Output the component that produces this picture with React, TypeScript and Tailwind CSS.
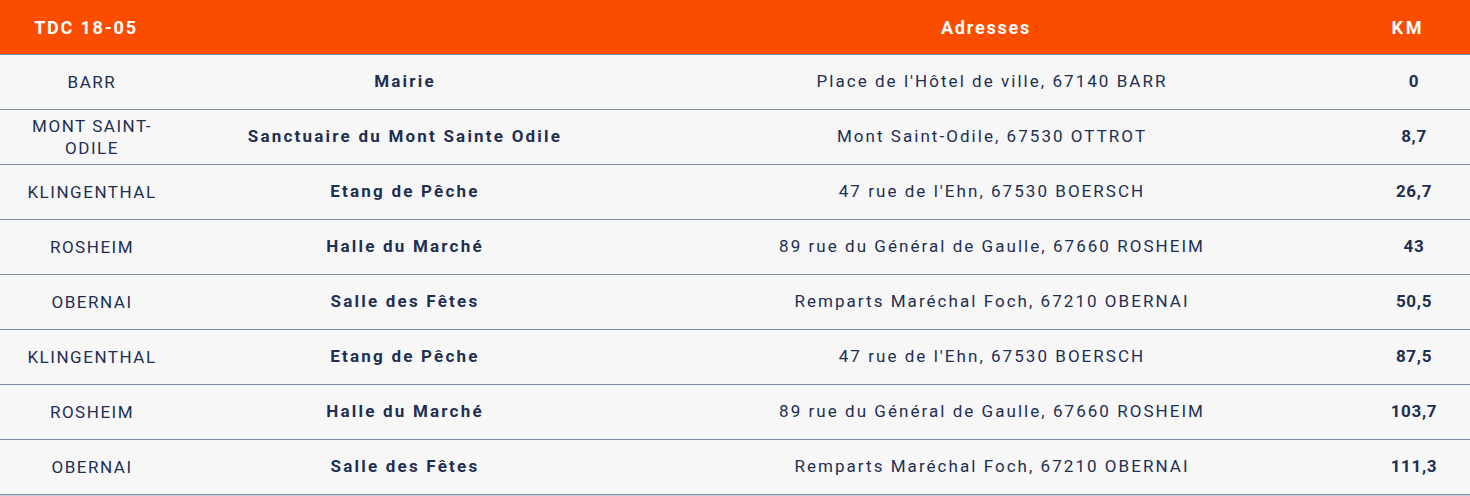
import React from 'react'

type Stop = {
  town: string
  place: string
  address: string
  km: string
}

const stops: Stop[] = [
  { town: 'BARR', place: 'Mairie', address: "Place de l'Hôtel de ville, 67140 BARR", km: '0' },
  { town: 'MONT SAINT-ODILE', place: 'Sanctuaire du Mont Sainte Odile', address: 'Mont Saint-Odile, 67530 OTTROT', km: '8,7' },
  { town: 'KLINGENTHAL', place: 'Etang de Pêche', address: "47 rue de l'Ehn, 67530 BOERSCH", km: '26,7' },
  { town: 'ROSHEIM', place: 'Halle du Marché', address: '89 rue du Général de Gaulle, 67660 ROSHEIM', km: '43' },
  { town: 'OBERNAI', place: 'Salle des Fêtes', address: 'Remparts Maréchal Foch, 67210 OBERNAI', km: '50,5' },
  { town: 'KLINGENTHAL', place: 'Etang de Pêche', address: "47 rue de l'Ehn, 67530 BOERSCH", km: '87,5' },
  { town: 'ROSHEIM', place: 'Halle du Marché', address: '89 rue du Général de Gaulle, 67660 ROSHEIM', km: '103,7' },
  { town: 'OBERNAI', place: 'Salle des Fêtes', address: 'Remparts Maréchal Foch, 67210 OBERNAI', km: '111,3' },
]

const cols = 'grid grid-cols-[184px_442px_1fr_112px]'

const App = () => {
  return (
    <div className="min-h-screen bg-[#c9cdd5] font-['Roboto',sans-serif] text-[#1d2f52]">
      <div className={`${cols} h-[55px] bg-[#fa4d00] border-b border-[#7d8cab] text-white font-bold text-[18px] tracking-[0.1em]`}>
        <div className="flex items-center justify-center pr-3">TDC 18-05</div>
        <div />
        <div className="flex items-center justify-center pr-3">Adresses</div>
        <div className="flex items-center justify-center pr-3 tracking-[0.16em]">KM</div>
      </div>
      {stops.map((s, i) => (
        <div key={i} className={`${cols} h-[55px] bg-[#f7f7f7] border-b border-[#7d8cab] text-[17px] tracking-[0.12em]`}>
          <div className="flex items-center justify-center px-[20px] text-center leading-[22px] tracking-[0.09em]">{s.town}</div>
          <div className="flex items-center justify-center font-bold tracking-[0.13em]">{s.place}</div>
          <div className="flex items-center justify-center">{s.address}</div>
          <div className="flex items-center justify-center font-bold tracking-[0.04em]">{s.km}</div>
        </div>
      ))}
    </div>
  )
}

export default App
